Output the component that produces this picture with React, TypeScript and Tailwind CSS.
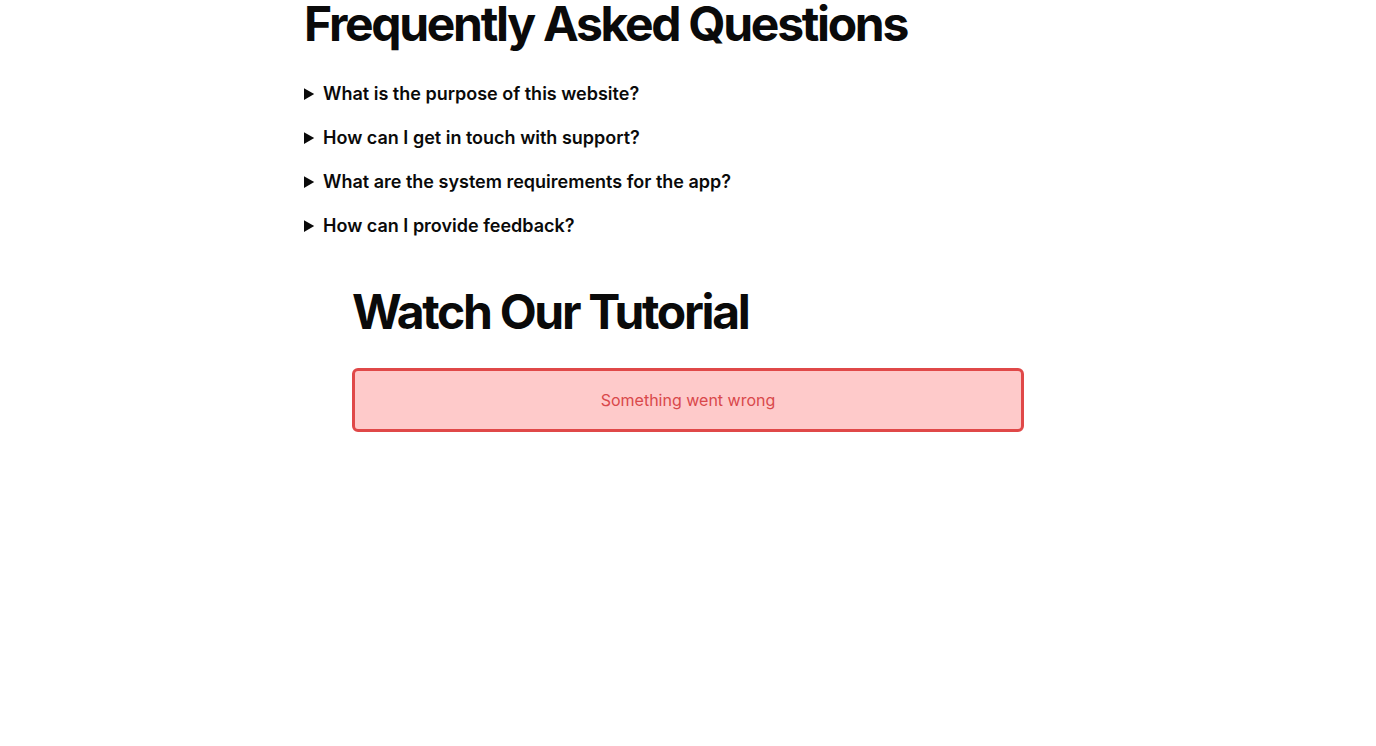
const faqs = [
  "What is the purpose of this website?",
  "How can I get in touch with support?",
  "What are the system requirements for the app?",
  "How can I provide feedback?",
];

export default function App() {
  return (
    <div className="min-h-screen bg-white font-['Inter',sans-serif] text-[#0a0a0a]">
      <div className="max-w-3xl mx-auto">
        {/* FAQ */}
        <section>
          <h1 className="text-5xl leading-none font-bold tracking-[-0.048em]">Frequently Asked Questions</h1>
          <div className="mt-8 flex flex-col gap-4">
            {faqs.map((q) => (
              <details key={q}>
                <summary className="text-lg leading-7 font-semibold cursor-pointer">{q}</summary>
              </details>
            ))}
          </div>
        </section>

        {/* Tutorial */}
        <section className="px-12 mt-12">
          <h2 className="text-5xl leading-none font-bold tracking-[-0.048em]">Watch Our Tutorial</h2>
          <div className="mt-8 h-[64px] flex items-center justify-center rounded-md border-[3px] border-[#e04848] bg-[#fecaca]">
            <span className="text-base text-[#d9484b]">Something went wrong</span>
          </div>
        </section>
      </div>
    </div>
  );
}
